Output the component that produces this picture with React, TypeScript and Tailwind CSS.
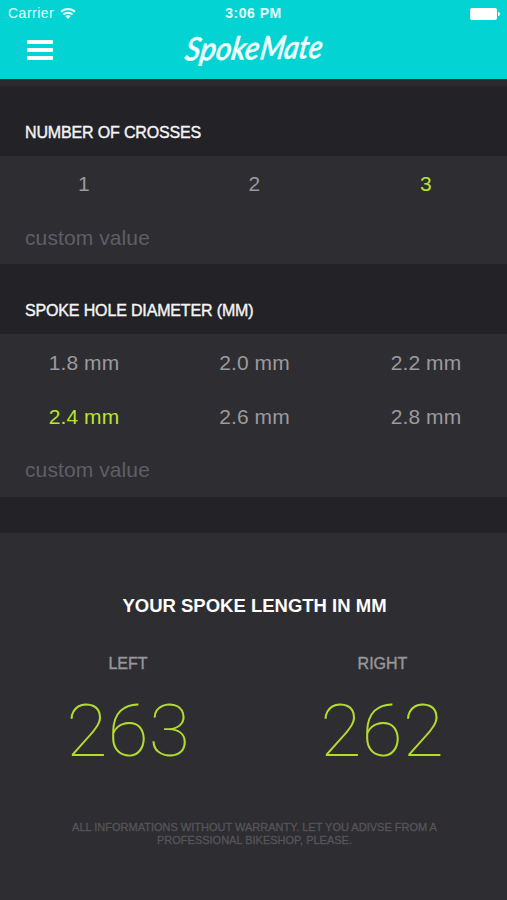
import React, { useState } from 'react';

const crosses = ['1', '2', '3'];
const diameters = ['1.8 mm', '2.0 mm', '2.2 mm', '2.4 mm', '2.6 mm', '2.8 mm'];

interface OptionSectionProps {
  title: string;
  options: string[];
  initial: string;
  optionClass: string;
  inputClass: string;
}

const OptionSection: React.FC<OptionSectionProps> = ({ title, options, initial, optionClass, inputClass }) => {
  const [selected, setSelected] = useState(initial);

  return (
    <section>
      <div className="h-[70px] bg-[#232327] pt-[37px] pl-[25px]">
        <h2 className="text-[16px] leading-[20px] tracking-[-0.15px] text-[#f4f4f4] [-webkit-text-stroke:0.4px_#f4f4f4]">{title}</h2>
      </div>
      <div className="bg-[#2e2d32]">
        <div className="grid grid-cols-[168px_173px_170px]">
          {options.map(option => (
            <button
              key={option}
              onClick={() => setSelected(option)}
              className={`h-[54px] text-[21px] leading-[24px] tracking-[0.1px] ${optionClass} ${selected === option ? 'text-[#b9e42f]' : 'text-[#9b9a9d]'}`}
            >
              {option}
            </button>
          ))}
        </div>
        <input
          type="text"
          placeholder="custom value"
          className={`block w-full bg-transparent pl-[25px] text-[21px] tracking-[0.1px] outline-none placeholder:text-[#5f5e67] ${inputClass}`}
        />
      </div>
    </section>
  );
};

const WifiIcon = () => (
  <svg width="16" height="13" viewBox="0 0 16 13" fill="none" stroke="#e5ffff" strokeWidth="2">
    <path d="M1 4.8a10 10 0 0 1 14 0" />
    <path d="M3.5 7.5a6.4 6.4 0 0 1 9 0" />
    <path d="M8 12 5.4 9.3a3.8 3.8 0 0 1 5.2 0Z" fill="#e5ffff" stroke="none" />
  </svg>
);

const Logo = () => (
  <svg className="mx-auto" width="190" height="52" viewBox="0 0 190 52" role="img">
    <g transform="translate(25 33.5) rotate(-1) skewX(-10)" fontFamily="Lato, sans-serif" fontStyle="italic" fontWeight="500" fill="#f2ffff" stroke="#f2ffff" strokeWidth="0.6">
      <text x="0" y="0" fontSize="32" textLength="74" lengthAdjust="spacingAndGlyphs">Spoke</text>
      <text x="75" y="0" fontSize="32" textLength="62" lengthAdjust="spacingAndGlyphs">Mate</text>
    </g>
  </svg>
);

const Result = ({ label, value }: { label: string; value: number }) => (
  <div className="flex flex-col items-center">
    <span className="text-[16px] leading-[20px] text-[#98979a] [-webkit-text-stroke:0.4px_#98979a]">{label}</span>
    <span className="mt-[16px] scale-x-[1.045] font-['Roboto'] text-[72px] leading-[84px] font-thin text-[#b4dc2e]">{value}</span>
  </div>
);

export default function App() {
  return (
    <div className="h-[900px] w-[507px] overflow-hidden bg-[#2e2d32] font-['Liberation_Sans',Arial,sans-serif]">
      <header className="h-[79px] bg-[#03d4d3] text-[#e5ffff]">
        <div className="grid h-[27px] grid-cols-3 items-center">
          <div className="flex items-center gap-[6px] pl-[8px] text-[14px] tracking-[0.5px]">
            <span>Carrier</span>
            <WifiIcon />
          </div>
          <span className="text-center text-[14px] font-bold tracking-[0.5px]">3:06 PM</span>
          <div className="flex items-center justify-end gap-px pr-[7px]">
            <div className="h-[12px] w-[27px] rounded-[2px] bg-white" />
            <div className="h-[4px] w-[2px] rounded-r-full bg-white" />
          </div>
        </div>
        <div className="grid grid-cols-[127px_1fr_127px] items-start">
          <button aria-label="Menu" className="mt-[13px] ml-[27px] flex w-[26px] flex-col gap-[4px]">
            <span className="h-[4px] rounded-[1px] bg-white" />
            <span className="h-[4px] rounded-[1px] bg-white" />
            <span className="h-[4px] rounded-[1px] bg-white" />
          </button>
          <Logo />
        </div>
      </header>

      <div className="h-[7px] bg-[#2c2a2e]" />
      <OptionSection title="NUMBER OF CROSSES" options={crosses} initial="3" optionClass="pt-[2px]" inputClass="h-[54px] pt-[2px]" />
      <OptionSection title="SPOKE HOLE DIAMETER (MM)" options={diameters} initial="2.4 mm" optionClass="pt-[3px]" inputClass="h-[55px] pt-px" />
      <div className="h-[36px] bg-[#232327]" />

      <section className="pt-[61px] pl-[2px] text-center">
        <h2 className="text-[18.5px] leading-[24px] font-bold text-white">YOUR SPOKE LENGTH IN MM</h2>
        <div className="grid grid-cols-[252px_257px] pt-[36px]">
          <Result label="LEFT" value={263} />
          <Result label="RIGHT" value={262} />
        </div>
        <p className="mx-auto mt-[47px] w-[400px] text-[11px] leading-[13px] text-[#56555a] [-webkit-text-stroke:0.3px_#56555a]">
          ALL INFORMATIONS WITHOUT WARRANTY. LET YOU ADIVSE FROM A<br />
          PROFESSIONAL BIKESHOP, PLEASE.
        </p>
      </section>
    </div>
  );
}
